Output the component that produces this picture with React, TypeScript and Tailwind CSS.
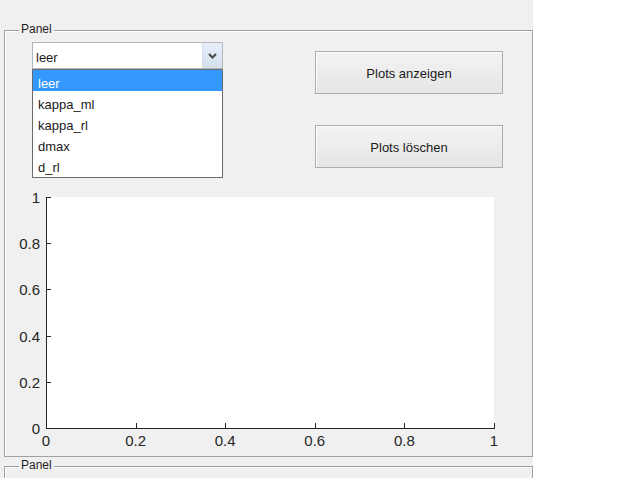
import React from 'react';

const options = ['leer', 'kappa_ml', 'kappa_rl', 'dmax', 'd_rl'];
const ticks = [0, 0.2, 0.4, 0.6, 0.8, 1];

// axes box in page coordinates
const X0 = 46;
const X1 = 494;
const Y0 = 428;
const Y1 = 197;

const PanelTitle: React.FC<{ title: string }> = ({ title }) => (
  <span className="absolute -top-[10px] left-[14px] bg-[#f0f0f0] px-[2px] text-[12px] leading-[16px] text-[#1e1e1e]">
    {title}
  </span>
);

const Chevron = () => (
  <svg width="9" height="6" viewBox="0 0 9 6" fill="none">
    <path d="M1 1 L4.5 4.5 L8 1" stroke="#4a4a4a" strokeWidth="2" />
  </svg>
);

const PopupMenu: React.FC = () => (
  <div className="relative h-[27px] w-[191px]">
    <div className="flex h-full w-full border border-[#b4b6bb] bg-white">
      <span className="flex-1 pl-[3px] text-[13px] leading-[30px] text-[#1a1a1a]">leer</span>
      <div className="flex w-[20px] items-center justify-center border-l border-[#d5dde8] bg-gradient-to-b from-[#e6eef8] to-[#d4e0ee]">
        <Chevron />
      </div>
    </div>
    <ul className="absolute left-0 top-[27px] w-[191px] border border-[#6b6b6b] bg-white pb-[2px]">
      {options.map((o, i) => (
        <li
          key={o}
          className={
            i === 0
              ? 'h-[21px] bg-[#3399ff] pl-[5px] text-[13px] leading-[27px] text-white'
              : 'h-[21px] pl-[5px] text-[13px] leading-[27px] text-[#1a1a1a]'
          }
        >
          {o}
        </li>
      ))}
    </ul>
  </div>
);

const PushButton: React.FC<{ label: string }> = ({ label }) => (
  <button className="h-[43px] w-[188px] border border-[#adadad] bg-gradient-to-b from-[#f3f3f3] to-[#e5e5e5] pt-[2px] text-[13px] text-[#1a1a1a] shadow-[inset_1px_1px_0_#fcfcfc]">
    {label}
  </button>
);

const Axes: React.FC = () => (
  <svg width="527" height="271" viewBox="5 185 527 271" className="block" fontFamily="'Liberation Sans', Arial, sans-serif">
    <rect x={X0} y={Y1} width={X1 - X0} height={Y0 - Y1} fill="#fff" />
    <g stroke="#262626" strokeWidth="1" shapeRendering="crispEdges">
      <line x1={X0 + 0.5} y1={Y1} x2={X0 + 0.5} y2={Y0 + 1} />
      <line x1={X0} y1={Y0 + 0.5} x2={X1 + 1} y2={Y0 + 0.5} />
      {ticks.map((t) => {
        const y = Math.round(Y0 - t * (Y0 - Y1)) + 0.5;
        const x = Math.round(X0 + t * (X1 - X0)) + 0.5;
        return (
          <g key={t}>
            <line x1={X0} y1={y} x2={X0 + 5} y2={y} />
            <line x1={x} y1={Y0} x2={x} y2={Y0 - 5} />
          </g>
        );
      })}
    </g>
    <g fill="#262626" fontSize="15">
      {ticks.map((t) => {
        const y = Y0 - t * (Y0 - Y1);
        const x = X0 + t * (X1 - X0);
        return (
          <g key={t}>
            <text x={40} y={y + 6} textAnchor="end">{String(t)}</text>
            <text x={x} y={446} textAnchor="middle">{String(t)}</text>
          </g>
        );
      })}
    </g>
  </svg>
);

export default function App() {
  return (
    <div className="flex h-[478px] w-[639px] overflow-hidden bg-white font-['Liberation_Sans',Arial,sans-serif]">
      <div className="flex h-full w-[533px] flex-col bg-[#f0f0f0]">
        <div className="relative ml-[4px] mt-[30px] h-[427px] w-[529px] shrink-0 border border-[#a0a0a0] shadow-[inset_1px_1px_0_#fff]">
          <PanelTitle title="Panel" />
          <div className="flex h-[154px] pl-[27px] pt-[11px]">
            <PopupMenu />
            <div className="ml-[92px] mt-[9px] flex flex-col gap-[31px]">
              <PushButton label="Plots anzeigen" />
              <PushButton label="Plots löschen" />
            </div>
          </div>
          <Axes />
        </div>
        <div className="relative ml-[4px] mt-[9px] h-[40px] w-[529px] shrink-0 border border-[#a0a0a0] shadow-[inset_1px_1px_0_#fff]">
          <PanelTitle title="Panel" />
        </div>
      </div>
    </div>
  );
}
